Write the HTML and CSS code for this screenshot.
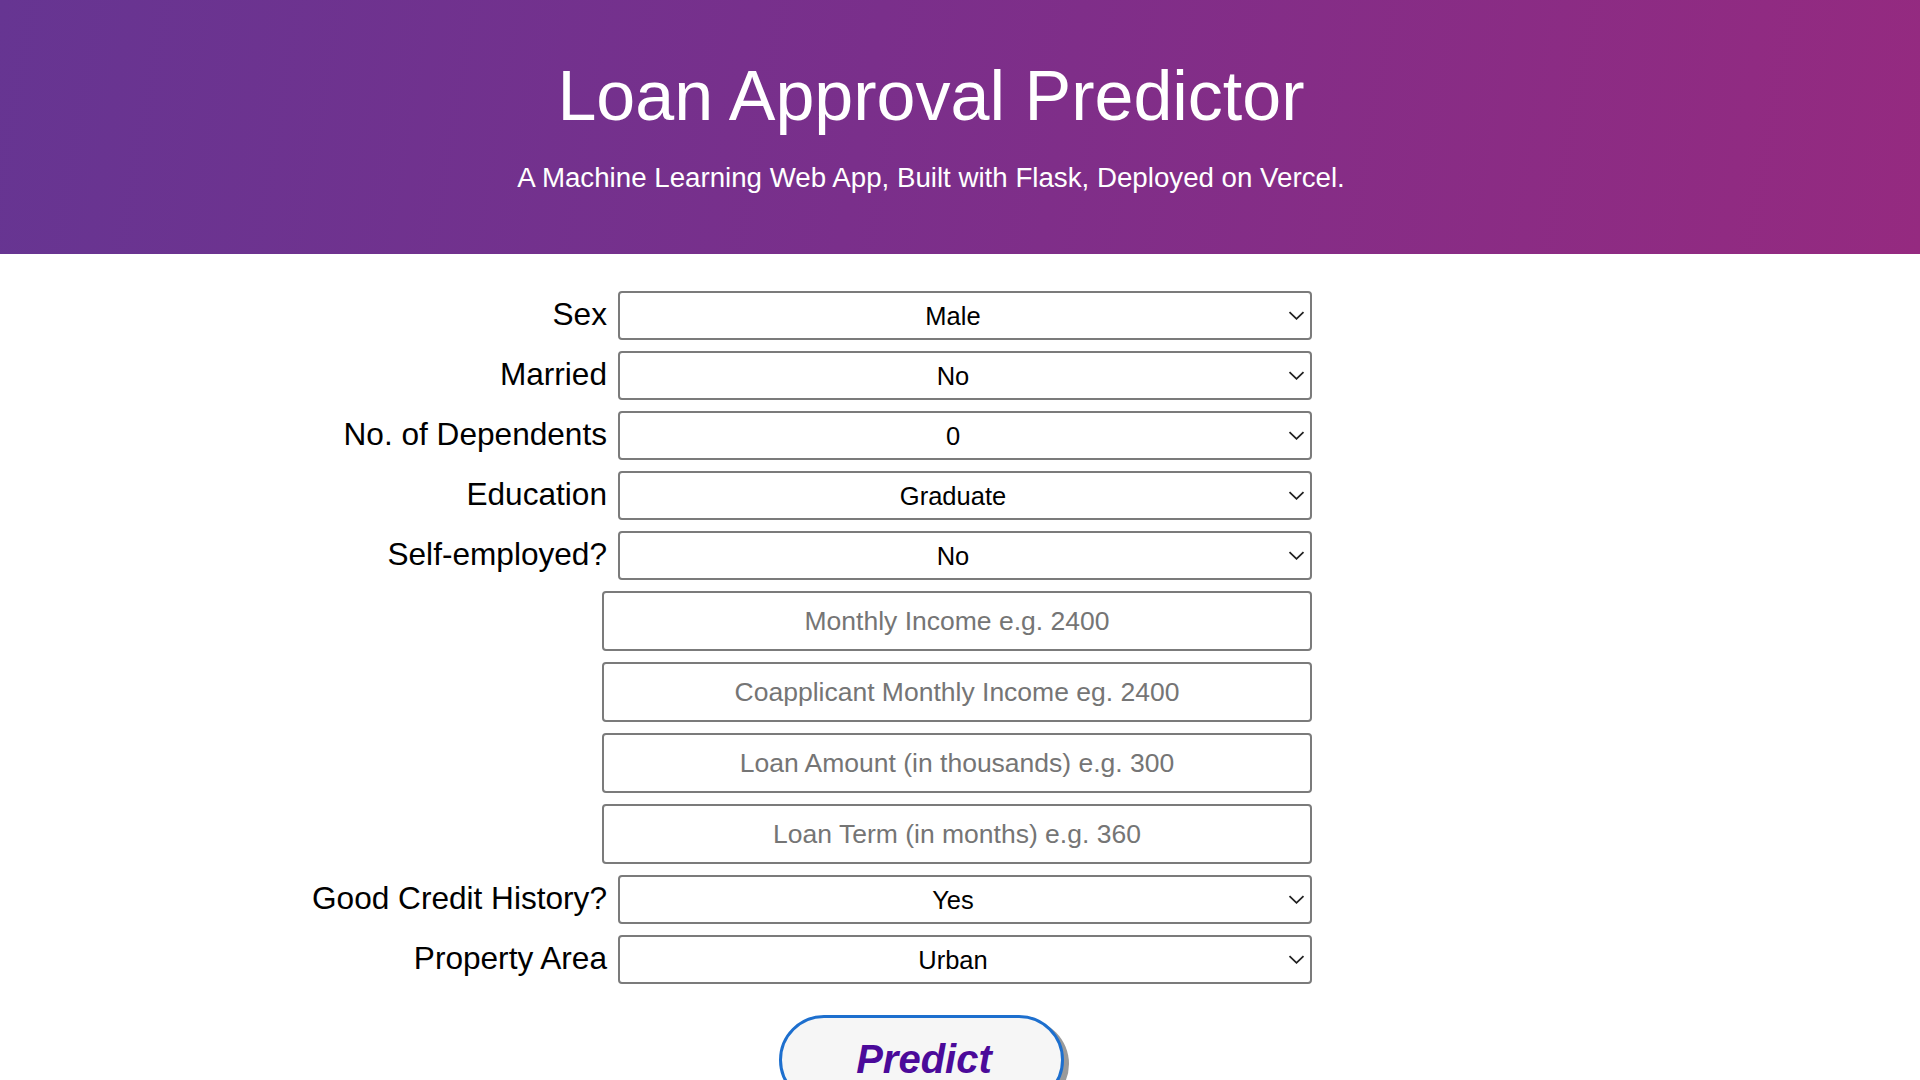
FILE: index.html
```html
<!DOCTYPE html>
<html lang="en">
<head>
<meta charset="utf-8">
<title>Loan Approval Predictor</title>
<link rel="stylesheet" href="styles.css">
</head>
<body>
<header class="hero">
  <h1 class="hero-title">Loan Approval Predictor</h1>
  <p class="hero-sub">A Machine Learning Web App, Built with Flask, Deployed on Vercel.</p>
</header>
<main class="main">
  <form class="form-grid">
    <label class="lbl" for="sex">Sex</label>
    <div class="sel-wrap">
      <select id="sex" class="sel"><option>Male</option><option>Female</option></select>
      <svg class="chev" viewBox="0 0 17 9" width="17" height="9"><path d="M1.5 1.2l7 6.6 7-6.6" fill="none" stroke="#222" stroke-width="1.8"/></svg>
    </div>

    <label class="lbl" for="married">Married</label>
    <div class="sel-wrap">
      <select id="married" class="sel"><option>No</option><option>Yes</option></select>
      <svg class="chev" viewBox="0 0 17 9" width="17" height="9"><path d="M1.5 1.2l7 6.6 7-6.6" fill="none" stroke="#222" stroke-width="1.8"/></svg>
    </div>

    <label class="lbl" for="dep">No. of Dependents</label>
    <div class="sel-wrap">
      <select id="dep" class="sel"><option>0</option><option>1</option><option>2</option><option>3+</option></select>
      <svg class="chev" viewBox="0 0 17 9" width="17" height="9"><path d="M1.5 1.2l7 6.6 7-6.6" fill="none" stroke="#222" stroke-width="1.8"/></svg>
    </div>

    <label class="lbl" for="edu">Education</label>
    <div class="sel-wrap">
      <select id="edu" class="sel"><option>Graduate</option><option>Not Graduate</option></select>
      <svg class="chev" viewBox="0 0 17 9" width="17" height="9"><path d="M1.5 1.2l7 6.6 7-6.6" fill="none" stroke="#222" stroke-width="1.8"/></svg>
    </div>

    <label class="lbl" for="self">Self-employed?</label>
    <div class="sel-wrap">
      <select id="self" class="sel"><option>No</option><option>Yes</option></select>
      <svg class="chev" viewBox="0 0 17 9" width="17" height="9"><path d="M1.5 1.2l7 6.6 7-6.6" fill="none" stroke="#222" stroke-width="1.8"/></svg>
    </div>

    <input class="txt" type="text" placeholder="Monthly Income e.g. 2400">
    <input class="txt" type="text" placeholder="Coapplicant Monthly Income eg. 2400">
    <input class="txt" type="text" placeholder="Loan Amount (in thousands) e.g. 300">
    <input class="txt" type="text" placeholder="Loan Term (in months) e.g. 360">

    <label class="lbl" for="credit">Good Credit History?</label>
    <div class="sel-wrap">
      <select id="credit" class="sel"><option>Yes</option><option>No</option></select>
      <svg class="chev" viewBox="0 0 17 9" width="17" height="9"><path d="M1.5 1.2l7 6.6 7-6.6" fill="none" stroke="#222" stroke-width="1.8"/></svg>
    </div>

    <label class="lbl" for="area">Property Area</label>
    <div class="sel-wrap">
      <select id="area" class="sel"><option>Urban</option><option>Semiurban</option><option>Rural</option></select>
      <svg class="chev" viewBox="0 0 17 9" width="17" height="9"><path d="M1.5 1.2l7 6.6 7-6.6" fill="none" stroke="#222" stroke-width="1.8"/></svg>
    </div>
  </form>
  <div class="btn-row">
    <button class="predict" type="button">Predict</button>
  </div>
</main>
</body>
</html>
```

FILE: styles.css
```css
html, body {
  margin: 0;
  padding: 0;
  background: #ffffff;
}
body {
  font-family: "Liberation Sans", Arial, Helvetica, sans-serif;
  color: #000;
  overflow: hidden;
}
.hero {
  background: linear-gradient(100deg, #663592 0%, #7a2f8b 45%, #952a80 100%);
  color: #fff;
  text-align: center;
  padding: 56px 58px 0 0;
  height: 254px;
  box-sizing: border-box;
}
.hero-title {
  margin: 0;
  font-size: 70px;
  line-height: 80px;
  font-weight: 400;
}
.hero-sub {
  margin: 26px 0 0;
  font-size: 27.7px;
  line-height: 32px;
}
.main {
  padding-top: 37px;
}
.form-grid {
  display: grid;
  grid-template-columns: 1fr 5px 11px 694px 608px;
  row-gap: 11px;
  align-items: center;
}
.lbl {
  grid-column: 1 / 3;
  justify-self: end;
  font-size: 31.6px;
  line-height: 36px;
  padding-bottom: 4px;
  white-space: nowrap;
}
.sel-wrap {
  grid-column: 4 / 5;
  position: relative;
  height: 49px;
}
.sel {
  appearance: none;
  -webkit-appearance: none;
  width: 100%;
  height: 49px;
  box-sizing: border-box;
  border: 2px solid #7b7b7b;
  border-radius: 4px;
  background: #fff;
  font-family: "Liberation Sans", Arial, sans-serif;
  font-size: 25.5px;
  color: #000;
  text-align: center;
  text-align-last: center;
  padding: 0 32px 0 8px;
  margin: 0;
}
.chev {
  position: absolute;
  right: 7px;
  top: 20px;
  pointer-events: none;
}
.txt {
  grid-column: 2 / 5;
  height: 60px;
  box-sizing: border-box;
  border: 2px solid #7b7b7b;
  border-radius: 4px;
  background: #fff;
  font-family: "Liberation Sans", Arial, sans-serif;
  font-size: 26.5px;
  text-align: center;
  padding: 0 10px;
  margin: 0;
  width: 100%;
}
.txt::placeholder {
  color: #757575;
}
.btn-row {
  display: flex;
  justify-content: center;
  padding-top: 31px;
  padding-right: 78px;
}
.predict {
  width: 285px;
  height: 90px;
  border: 3px solid #1d6fce;
  border-radius: 45px;
  background: #f6f6f6;
  box-shadow: 5px 4px 0 #9a9a9a;
  font-family: "Liberation Sans", Arial, sans-serif;
  font-size: 40px;
  font-weight: 700;
  font-style: italic;
  color: #4b0a9a;
  padding: 0 0 2px 6px;
}
```
